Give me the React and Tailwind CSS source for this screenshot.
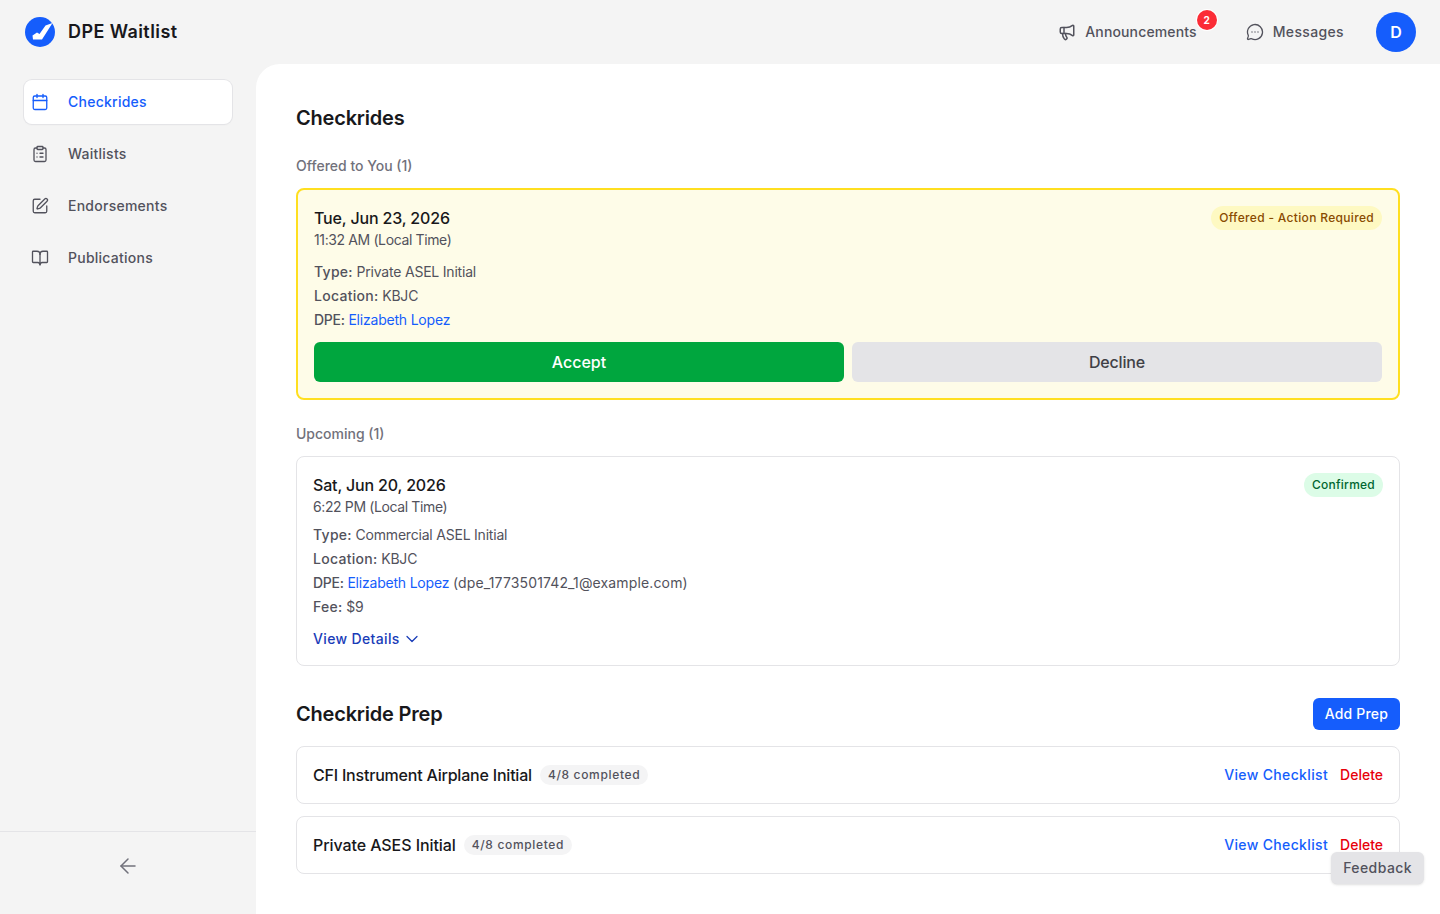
import React from 'react';
import { Calendar, ClipboardList, SquarePen, BookOpen, ArrowLeft, ChevronDown, MessageCircleMore, Megaphone } from 'lucide-react';

const font = { fontFamily: 'Inter, sans-serif' };

function NavItem({ icon: Icon, label, active }) {
  return (
    <a className={`flex items-center gap-3 h-11 rounded-lg text-sm font-medium tracking-[0.018em] ${active ? 'bg-white text-[#155dfc] shadow-[0_0_0_1px_#e4e4e7,0_1px_2px_rgba(0,0,0,0.05)]' : 'text-[#52525c]'}`}>
      <span className="w-8 flex justify-center"><Icon size={18} strokeWidth={1.75} /></span>
      {label}
    </a>
  );
}

function Row({ label, tight, children }) {
  return (
    <p className="text-sm leading-5 text-[#52525c] tracking-[-0.015em]">
      <span className={`font-medium ${tight ? 'tracking-[-0.02em]' : 'tracking-[0.02em]'}`}>{label}:</span> {children}
    </p>
  );
}

function PrepRow({ name, nameTracking }) {
  return (
    <div className="h-[58px] border border-[#e4e4e7] rounded-lg px-4 flex items-center justify-between">
      <div className="flex items-center gap-2">
        <span className={`text-base font-medium text-[#18181b] ${nameTracking}`}>{name}</span>
        <span className="h-5 px-2 rounded-full bg-[#f4f4f5] text-xs leading-5 font-medium text-[#52525c] tracking-[0.055em]">4/8 completed</span>
      </div>
      <div className="flex items-center gap-3 text-sm font-medium">
        <a className="text-[#155dfc] tracking-[0.025em]">View Checklist</a>
        <a className="text-[#e7000b]">Delete</a>
      </div>
    </div>
  );
}

export default function App() {
  return (
    <div style={font} className="h-[914px] overflow-hidden bg-[#f4f4f4] flex flex-col relative">
      {/* top bar */}
      <header className="h-16 shrink-0 flex items-center justify-between pl-6 pr-6">
        <div className="flex items-center gap-3">
          <svg width="32" height="32" viewBox="0 0 32 32">
            <circle cx="16" cy="16" r="15" fill="#155dfc" />
            <path d="M8.500 19.500L13 16.500l2.500 1.500 6-8.500 7-2.500L18 23.500H9z" fill="#fff" />
          </svg>
          <span className="text-lg font-semibold text-[#18181b] tracking-[0.023em]">DPE Waitlist</span>
        </div>
        <div className="flex items-center text-sm font-medium text-[#52525c]">
          <div className="relative flex items-center gap-[9px] mr-[49px] tracking-[0.01em]">
            <Megaphone size={18} strokeWidth={2} />
            Announcements
            <span className="absolute -top-3 -right-5 w-5 h-5 rounded-full bg-[#fb2c36] ring-1 ring-white text-white text-[10px] font-bold flex items-center justify-center">2</span>
          </div>
          <div className="flex items-center gap-[9px] mr-8 tracking-[0.025em]">
            <MessageCircleMore size={18} strokeWidth={1.75} />
            Messages
          </div>
          <div className="w-10 h-10 rounded-full bg-[#155dfc] text-white text-base font-semibold flex items-center justify-center">D</div>
        </div>
      </header>

      <div className="flex flex-1 min-h-0">
        {/* sidebar */}
        <aside className="w-64 shrink-0 flex flex-col">
          <nav className="flex-1 px-6 pt-4 flex flex-col gap-2">
            <NavItem icon={Calendar} label="Checkrides" active />
            <NavItem icon={ClipboardList} label="Waitlists" />
            <NavItem icon={SquarePen} label="Endorsements" />
            <NavItem icon={BookOpen} label="Publications" />
          </nav>
          <div className="h-[83px] border-t border-[#e4e4e7] pt-[22px] flex items-start justify-center text-[#71717b]">
            <ArrowLeft size={24} strokeWidth={1.5} />
          </div>
        </aside>

        {/* main */}
        <main className="flex-1 bg-white rounded-tl-3xl p-10">
          <h1 className="text-xl leading-7 font-semibold text-[#18181b] tracking-[-0.01em]">Checkrides</h1>

          <h2 className="mt-6 mb-3 text-sm leading-5 font-medium text-[#71717b]">Offered to You (1)</h2>
          <div className="border-2 border-[#ffdf20] bg-[#fefce8] rounded-lg p-4">
            <div className="flex justify-between items-start">
              <div>
                <div className="text-base leading-6 font-medium text-[#18181b] tracking-[-0.01em]">Tue, Jun 23, 2026</div>
                <div className="text-sm leading-5 text-[#52525c] tracking-[-0.027em]">11:32 AM (Local Time)</div>
              </div>
              <span className="h-6 px-2 rounded-full bg-[#fef9c2] text-xs leading-6 font-medium text-[#894b00] tracking-[0.027em]">Offered - Action Required</span>
            </div>
            <div className="mt-3 flex flex-col gap-1">
              <Row label="Type">Private ASEL Initial</Row>
              <Row label="Location">KBJC</Row>
              <Row label="DPE" tight><a className="text-[#155dfc]">Elizabeth Lopez</a></Row>
            </div>
            <div className="mt-3 flex gap-2">
              <button className="flex-1 h-10 rounded-md bg-[#00a63e] text-white text-base font-medium">Accept</button>
              <button className="flex-1 h-10 rounded-md bg-[#e4e4e7] text-[#3f3f46] text-base font-medium tracking-[-0.01em]">Decline</button>
            </div>
          </div>

          <h2 className="mt-6 mb-3 text-sm leading-5 font-medium text-[#71717b]">Upcoming (1)</h2>
          <div className="border border-[#e4e4e7] rounded-lg p-4">
            <div className="flex justify-between items-start">
              <div>
                <div className="text-base leading-6 font-medium text-[#18181b] tracking-[-0.01em]">Sat, Jun 20, 2026</div>
                <div className="text-sm leading-5 text-[#52525c] tracking-[-0.027em]">6:22 PM (Local Time)</div>
              </div>
              <span className="h-6 px-2 rounded-full bg-[#dcfce7] text-xs leading-6 font-medium text-[#016630] tracking-[0.02em]">Confirmed</span>
            </div>
            <div className="mt-2 flex flex-col gap-1">
              <Row label="Type">Commercial ASEL Initial</Row>
              <Row label="Location">KBJC</Row>
              <Row label="DPE" tight><a className="text-[#155dfc]">Elizabeth Lopez</a> <span className="tracking-[0.01em]">(dpe_1773501742_1@example.com)</span></Row>
              <Row label="Fee">$9</Row>
            </div>
            <a className="mt-3 h-5 flex items-center gap-0.5 text-sm font-medium text-[#193cb8] tracking-[0.025em]">
              View Details <ChevronDown size={20} strokeWidth={1.5} />
            </a>
          </div>

          <div className="mt-8 mb-4 flex items-center justify-between">
            <h2 className="text-xl leading-7 font-semibold text-[#18181b] tracking-[-0.01em]">Checkride Prep</h2>
            <button className="h-8 px-3 rounded-md bg-[#155dfc] text-white text-sm font-medium tracking-[0.012em]">Add Prep</button>
          </div>
          <div className="flex flex-col gap-3">
            <PrepRow name="CFI Instrument Airplane Initial" nameTracking="tracking-[-0.013em]" />
            <PrepRow name="Private ASES Initial" nameTracking="tracking-[-0.005em]" />
          </div>
        </main>
      </div>

      <button className="absolute right-4 bottom-[30px] h-8 px-3 rounded-md bg-[#e4e4e7] text-sm font-medium text-[#52525c] tracking-[0.03em] shadow-sm">Feedback</button>
    </div>
  );
}
